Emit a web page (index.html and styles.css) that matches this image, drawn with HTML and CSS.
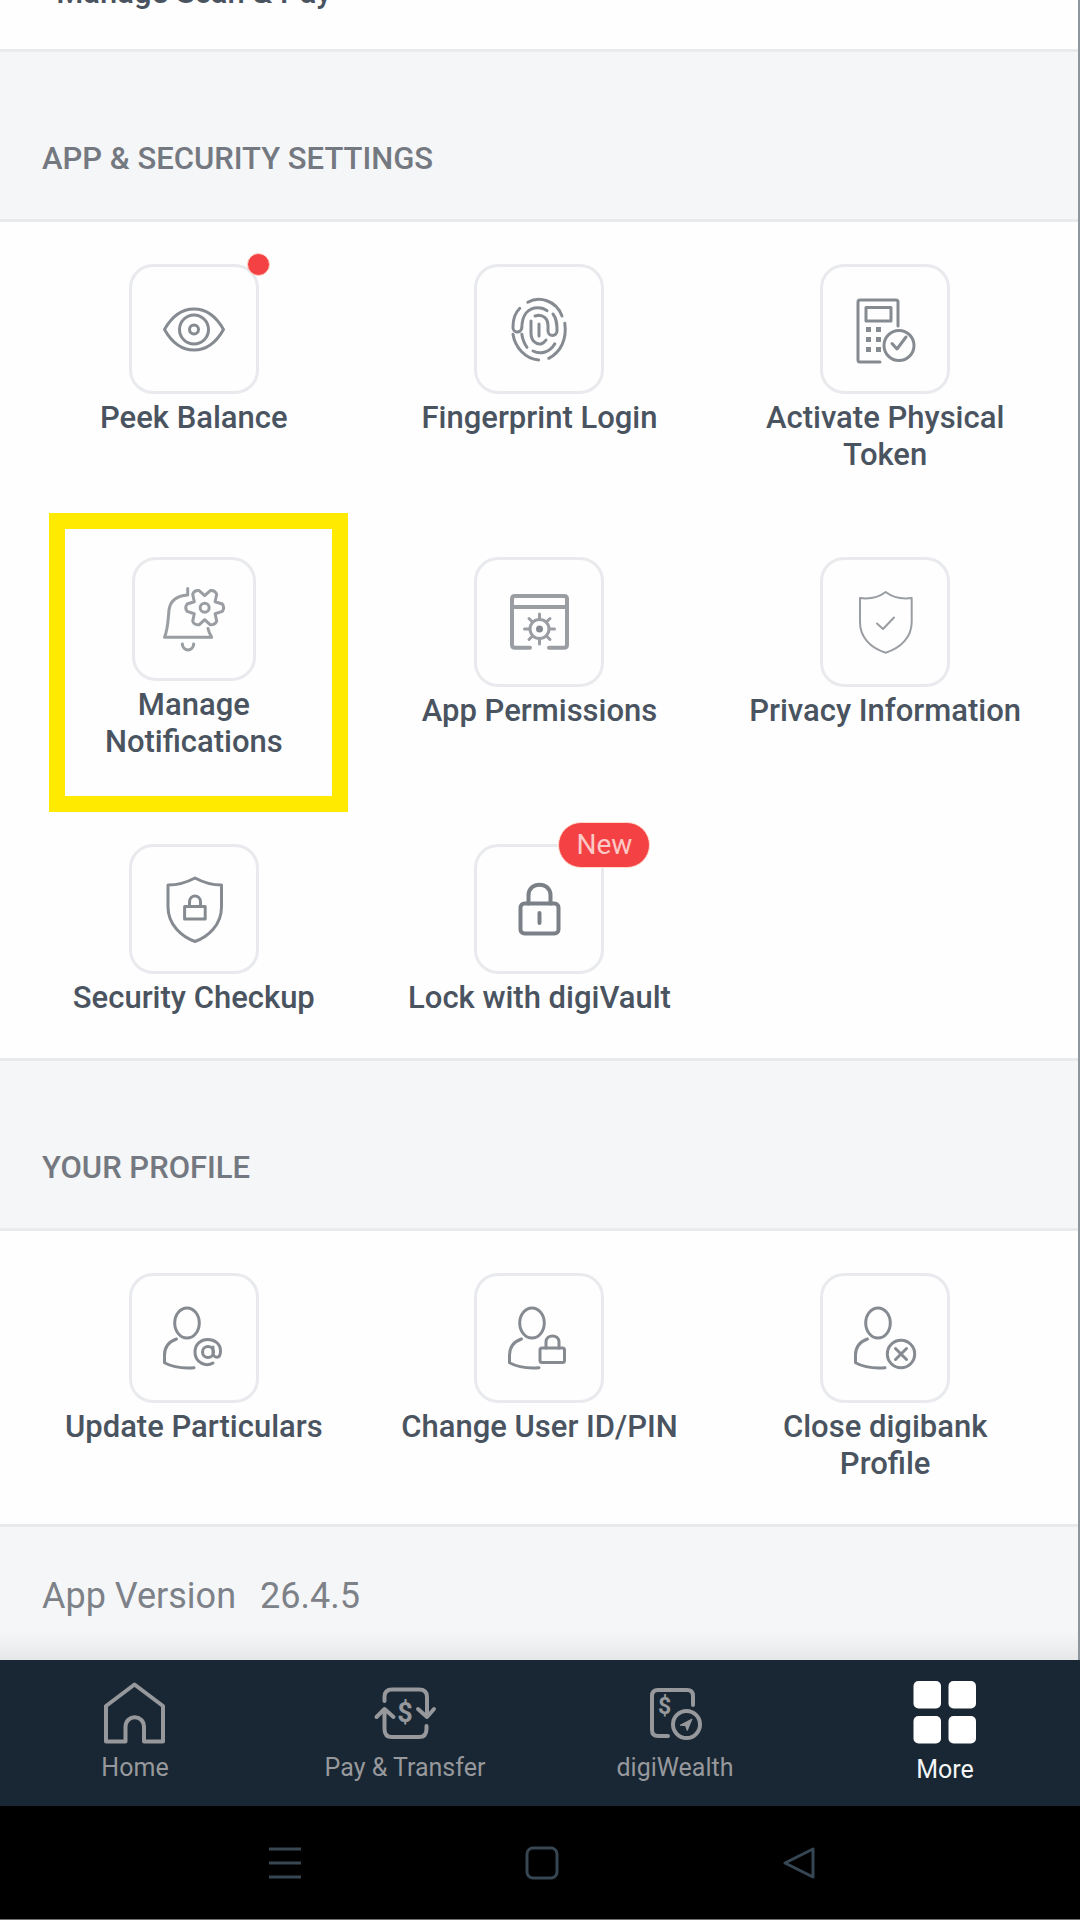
FILE: index.html
```html
<!DOCTYPE html>
<html lang="en">
<head>
<meta charset="utf-8">
<meta name="viewport" content="width=device-width, initial-scale=1">
<title>More</title>
<link rel="stylesheet" href="styles.css">
</head>
<body>
<main class="content">
  <section class="items items-scrolled">
    <button class="item" type="button"><span class="label">Manage Scan &amp; Pay</span></button>
  </section>

  <h2 class="band">APP &amp; SECURITY SETTINGS</h2>
  <section class="items">
    <button class="item" type="button">
      <span class="tile">
        <svg class="icon" viewBox="0 0 64 64" aria-hidden="true"><path d="M2.500 32.500Q14 12 32 12Q50 12 61.500 32.500Q50 53 32 53Q14 53 2.500 32.500Z"/><circle cx="32" cy="32.500" r="14.500"/><circle cx="32" cy="32.500" r="4.500"/></svg>
        <span class="dot"></span>
      </span>
      <span class="label">Peek Balance</span>
    </button>
    <button class="item" type="button">
      <span class="tile">
        <svg class="icon" viewBox="0 0 64 64" aria-hidden="true"><path d="M20.800 5.300C32-1 49 3 55 19M12.800 11.300C7 17 6 25 6 30A4.400 4.400 0 0 0 14.800 31C15 18 21 10.700 31 10.700C35 10.700 38 12 40 13.700M46 17C50 22 50 28 50 34A4.500 4.500 0 0 1 41 34V28C41 21 36 18.300 31.700 18.300L28 19M24 24V36C24 44 29 47.500 34 47Q37 46 39 43M32 27V39M14.800 37.300Q16 45 20 50.300M26 54C34 58 43 55 47.800 46.700M6 37.300C8 50 18 62 31.700 63M57.800 26.300C60 42 54 55 41.700 61.300"/></svg>
      </span>
      <span class="label">Fingerprint Login</span>
    </button>
    <button class="item" type="button">
      <span class="tile">
        <svg class="icon" viewBox="0 0 64 64" aria-hidden="true"><path d="M45 29V5Q45 3 43 3H7Q5 3 5 5V63Q5 65 7 65H27M13 10.500H38V24H13Z"/><circle cx="46" cy="48.500" r="15"/><path d="M39 46.500L44 52L53 40"/><path class="solid" d="M13 30h5v5h-5zM23 30h5v5h-5zM13 40h5v5h-5zM23 40h5v5h-5zM13 50h5v5h-5zM23 50h5v5h-5z"/></svg>
      </span>
      <span class="label">Activate Physical Token</span>
    </button>

    <button class="item item-marked" type="button">
      <span class="tile tile-small">
        <svg class="icon icon-light" viewBox="0 0 64 64" aria-hidden="true"><path d="M25.700 1.500V8C14 9 8 15 7 23C6 33 6 42 2.500 50.300H49.700Q47 46 46 41.500M20.300 57C21 65 31 65 31.700 57"/><path d="M60.300 17Q63 20.700 60.300 24.400L53.100 26.700L54.700 34.100Q53 38 48.300 37.800L42.700 32.700L37.100 37.800Q32 38 30.700 34.100L32.300 26.700L25.100 24.400Q22.500 20.700 25.100 17L32.300 14.700L30.700 7.300Q32 3 37.100 3.600L42.700 8.700L48.300 3.600Q53 3 54.700 7.300L53.100 14.700Z"/><circle cx="42.700" cy="20.700" r="4.500"/></svg>
      </span>
      <span class="label">Manage Notifications</span>
    </button>
    <button class="item" type="button">
      <span class="tile">
        <svg class="icon icon-light" viewBox="0 0 64 64" aria-hidden="true"><path class="frame" d="M23 57.700H8Q5 57.700 5 54.700V9Q5 6 8 6H57Q60 6 60 9V54.700Q60 57.700 57 57.700H42M5 17H60"/><circle cx="32.500" cy="39" r="9.500"/><circle class="solid" cx="32.500" cy="39" r="3.500"/><path d="M32.500 29V24M32.500 49V54M22.500 39H17.500M42.500 39H47.500M25.500 32L22 28.500M39.500 32L43 28.500M25.500 46L22 49.500M39.500 46L43 49.500"/></svg>
      </span>
      <span class="label">App Permissions</span>
    </button>
    <button class="item" type="button">
      <span class="tile">
        <svg class="icon icon-thin" viewBox="0 0 64 64" aria-hidden="true"><path d="M7 8Q22 10 32.700 2Q43 10 58.700 8V32C58.700 47 48 58 32.700 62.700C17 58 7 47 7 32ZM24 33.500L30 39L41 27.500"/></svg>
      </span>
      <span class="label">Privacy Information</span>
    </button>

    <button class="item" type="button">
      <span class="tile">
        <svg class="icon" viewBox="0 0 64 64" aria-hidden="true"><path d="M33 1Q46 8 59.500 8V30C59.500 48 46 60 33 64.500C20 60 6 48 6 30V8Q20 8 33 1ZM22.600 29.500H43.200V42H22.600ZM27.500 29.500V25C27.500 17 38.500 17 38.500 25V29.500"/></svg>
      </span>
      <span class="label">Security Checkup</span>
    </button>
    <button class="item" type="button">
      <span class="tile">
        <svg class="icon icon-bold" viewBox="0 0 64 64" aria-hidden="true"><rect x="13.500" y="26.500" width="38" height="30" rx="4"/><path d="M21.500 26.500V18.500C21.500 4 43.500 4 43.500 18.500V26.500M32.500 36V46"/></svg>
        <span class="badge">New</span>
      </span>
      <span class="label">Lock with digiVault</span>
    </button>
  </section>

  <h2 class="band">YOUR PROFILE</h2>
  <section class="items">
    <button class="item" type="button">
      <span class="tile">
        <svg class="icon" viewBox="0 0 64 64" aria-hidden="true"><ellipse cx="25" cy="17" rx="12.300" ry="15"/><path d="M14.500 33C6 36 2.500 42 2.500 49V56.700Q14 63 32 61.700"/><path d="M51 57C44 61 33 57 33 46C33 29 58.500 30 58.500 45C58.500 54 51 52 51 47V41"/><circle cx="46" cy="46" r="5.500"/></svg>
      </span>
      <span class="label">Update Particulars</span>
    </button>
    <button class="item" type="button">
      <span class="tile">
        <svg class="icon" viewBox="0 0 64 64" aria-hidden="true"><ellipse cx="25" cy="17" rx="12.300" ry="15"/><path d="M14.500 33C6 36 2.500 42 2.500 49V56.700Q14 63 32 61.700"/><rect x="33" y="42" width="24.500" height="14.500" rx="2"/><path d="M39 42V36C39 28 52 28 52 36V42"/></svg>
      </span>
      <span class="label">Change User ID/PIN</span>
    </button>
    <button class="item" type="button">
      <span class="tile">
        <svg class="icon" viewBox="0 0 64 64" aria-hidden="true"><ellipse cx="25" cy="17" rx="12.300" ry="15"/><path d="M14.500 33C6 36 2.500 42 2.500 49V56.700Q14 63 32 61.700"/><circle cx="48" cy="48" r="13.700"/><path d="M42.500 42.500L53.500 53.500M53.500 42.500L42.500 53.500"/></svg>
      </span>
      <span class="label">Close digibank Profile</span>
    </button>
  </section>

  <p class="version"><span>App Version</span><span>26.4.5</span></p>
</main>

<nav class="tabs">
  <a class="tab" href="#home">
    <svg class="tab-icon" viewBox="0 0 64 64" aria-hidden="true"><path d="M31.500 3.500L60 25V60.500H41V46C41 33 22.500 33 22.500 46V60.500H3V25Z"/></svg>
    <span>Home</span>
  </a>
  <a class="tab" href="#pay">
    <svg class="tab-icon" viewBox="0 0 64 64" aria-hidden="true"><path d="M11.500 20V16Q11.500 8.500 19 8.500H46Q54 8.500 54 16V35M45 28L54 36L61 28M53.500 45V48Q53.500 56 46 56H19Q11.500 56 11.500 48V29M3.500 36L11.500 28L20.500 36"/><text class="sign" x="32" y="41" font-size="27">$</text></svg>
    <span>Pay &amp; Transfer</span>
  </a>
  <a class="tab" href="#wealth">
    <svg class="tab-icon" viewBox="0 0 64 64" aria-hidden="true"><path d="M50 24V15Q50 9 44 9H15Q9 9 9 15V49Q9 55 15 55H25"/><circle cx="43.500" cy="43.500" r="13.500"/><path class="arrow" d="M37.500 44L49 38L44.300 49.500L42.600 45Z"/><text class="sign" x="21.500" y="33" font-size="23">$</text></svg>
    <span>digiWealth</span>
  </a>
  <a class="tab tab-active" href="#more" aria-current="page">
    <svg class="tab-icon" viewBox="0 0 64 64" aria-hidden="true"><g class="squares"><rect x="0.500" y="0" width="27.500" height="27.500" rx="5"/><rect x="35.500" y="0" width="27.500" height="27.500" rx="5"/><rect x="0.500" y="35" width="27.500" height="27.500" rx="5"/><rect x="35.500" y="35" width="27.500" height="27.500" rx="5"/></g></svg>
    <span>More</span>
  </a>
</nav>

<footer class="system">
  <button class="key" type="button" aria-label="Recent apps"><svg class="key-icon" viewBox="0 0 36 36" aria-hidden="true"><path d="M2 4H34M2 18H34M2 32H34"/></svg></button>
  <button class="key" type="button" aria-label="Home screen"><svg class="key-icon" viewBox="0 0 36 36" aria-hidden="true"><rect x="3" y="3" width="30" height="30" rx="6"/></svg></button>
  <button class="key" type="button" aria-label="Back"><svg class="key-icon" viewBox="0 0 36 36" aria-hidden="true"><path d="M32 4V32L4 18Z"/></svg></button>
</footer>
</body>
</html>
```
FILE: styles.css
```css
*,
*::after {
  box-sizing: border-box;
}

body {
  margin: 0;
  min-height: 100vh;
  display: flex;
  flex-direction: column;
  background: #000;
  font-family: Roboto, "Liberation Sans", sans-serif;
  color: #4a5460;
}

.content {
  flex: 1;
  display: flex;
  flex-direction: column;
  background: #fefefe;
  border-right: 2px solid #8d969d;
}

.items {
  display: grid;
  grid-template-columns: repeat(3, 1fr);
  align-items: start;
  row-gap: 84px;
  padding: 42px 20px 42px 21px;
}

/* Row scrolled almost out of view at the top */
.items-scrolled {
  height: 49px;
  padding-top: 0;
  padding-bottom: 38px;
  align-content: end;
  overflow: hidden;
}

.item {
  position: relative;
  display: flex;
  flex-direction: column;
  align-items: center;
  gap: 5px;
  margin: 0;
  padding: 0;
  border: 0;
  background: none;
  color: inherit;
  font: inherit;
}

.item-marked::after {
  content: "";
  position: absolute;
  top: -44px;
  left: 28px;
  right: 19px;
  height: 299px;
  border: 16px solid #ffea00;
}

.tile {
  position: relative;
  display: grid;
  place-items: center;
  width: 130px;
  height: 130px;
  border: 3px solid #e9eaed;
  border-radius: 24px;
}

.tile-small {
  width: 124px;
  height: 124px;
}

.label {
  max-width: 290px;
  font-size: 31px;
  font-weight: 500;
  line-height: 37px;
  text-align: center;
}

.item-marked .label {
  max-width: 220px;
}

.icon {
  width: 64px;
  height: 64px;
  overflow: visible;
  fill: none;
  stroke: #868b92;
  stroke-width: 3;
  stroke-linecap: round;
  stroke-linejoin: round;
}

.icon-light {
  stroke: #9a9ea3;
}

.icon-thin {
  stroke: #9a9ea3;
  stroke-width: 2;
}

.icon-bold {
  stroke: #7b8087;
  stroke-width: 4;
}

.frame {
  stroke-width: 4;
}

.solid {
  fill: #868b92;
  stroke: none;
}

.dot {
  position: absolute;
  top: -14px;
  right: -14px;
  width: 23px;
  height: 23px;
  border: 1px solid #ffd9cc;
  border-radius: 50%;
  background: #f44144;
}

.badge {
  position: absolute;
  top: -25px;
  left: 81px;
  padding: 0 17px;
  border: 1px solid #ffd9cc;
  border-radius: 23px;
  background: #f44144;
  color: #fbc9c6;
  font-size: 28px;
  line-height: 44px;
}

.band {
  margin: 0;
  padding: 89px 42px 42px;
  border: solid #e8eaec;
  border-width: 3px 0;
  background: #f5f6f8;
  color: #747981;
  font-size: 31px;
  font-weight: 500;
  line-height: 36px;
}

.version {
  flex: 1;
  display: flex;
  gap: 24px;
  margin: 0;
  padding: 48px 42px 43px;
  border-top: 3px solid #e8eaec;
  background: linear-gradient(to top, #e6e7e9, #f5f6f8 28px);
  color: #7d8188;
  font-size: 36px;
  line-height: 42px;
}

.tabs {
  display: grid;
  grid-template-columns: repeat(4, 1fr);
  height: 146px;
  padding-top: 21px;
  background: #182733;
}

.tab {
  display: flex;
  flex-direction: column;
  align-items: center;
  gap: 8px;
  color: #97989c;
  font-size: 25px;
  line-height: 30px;
  text-decoration: none;
}

.tab-active {
  gap: 10px;
  color: #f4f5f6;
}

.tab-icon {
  width: 64px;
  height: 64px;
  fill: none;
  stroke: #97989c;
  stroke-width: 4;
  stroke-linecap: round;
  stroke-linejoin: round;
}

.sign {
  fill: #97989c;
  stroke: none;
  font-weight: 700;
  text-anchor: middle;
}

.arrow {
  fill: #97989c;
  stroke-width: 1;
}

.squares {
  fill: #fff;
  stroke: none;
}

.system {
  display: flex;
  justify-content: center;
  height: 114px;
  padding-left: 4px;
  border-bottom: 1px solid #6f6f6f;
  background: #000;
}

.key {
  flex: 0 1 257px;
  display: grid;
  place-items: center;
  padding: 0;
  border: 0;
  background: none;
}

.key-icon {
  width: 36px;
  height: 36px;
  fill: none;
  stroke: #364653;
  stroke-width: 3;
  stroke-linejoin: round;
}
```
